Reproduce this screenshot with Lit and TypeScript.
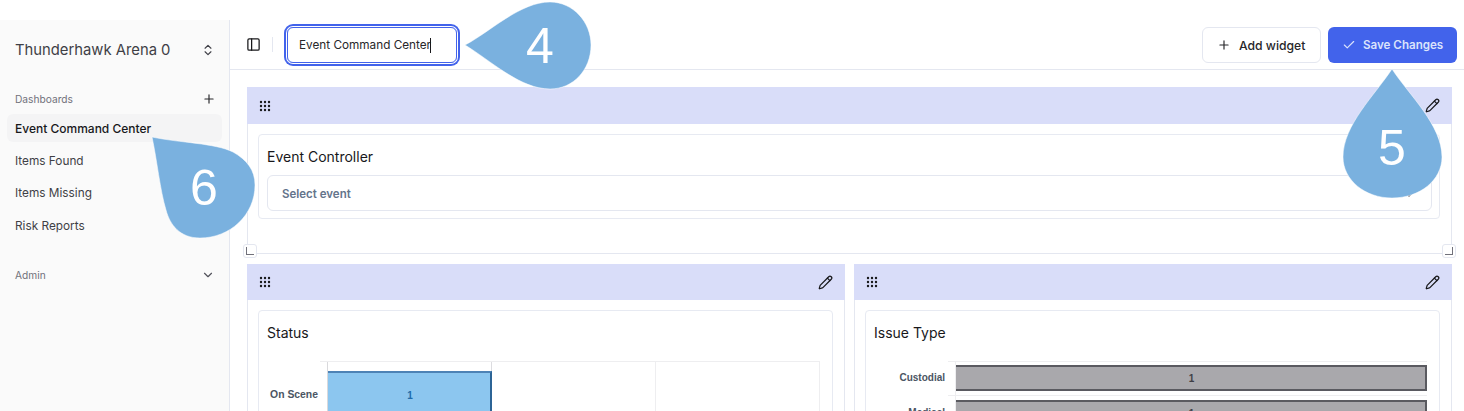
import { LitElement, html, css, svg } from "lit";
import { customElement } from "lit/decorators.js";

const grip = html`<svg class="ic" width="12" height="12" viewBox="0 0 12 12" fill="#18181b"><circle cx="2" cy="2" r="1.2"/><circle cx="6" cy="2" r="1.2"/><circle cx="10" cy="2" r="1.2"/><circle cx="2" cy="6" r="1.2"/><circle cx="6" cy="6" r="1.2"/><circle cx="10" cy="6" r="1.2"/><circle cx="2" cy="10" r="1.2"/><circle cx="6" cy="10" r="1.2"/><circle cx="10" cy="10" r="1.2"/></svg>`;
const pencil = html`<svg class="ic" width="15" height="15" viewBox="0 0 24 24" fill="none" stroke="#18181b" stroke-width="2" stroke-linecap="round" stroke-linejoin="round"><path d="M21.17 6.81a2.82 2.82 0 0 0-3.99-3.99L3.84 16.17a2 2 0 0 0-.5.83l-1.32 4.35a.5.5 0 0 0 .62.62l4.35-1.32a2 2 0 0 0 .83-.5z"/><path d="m15 5 4 4"/></svg>`;
const chevUD = html`<svg width="14" height="14" viewBox="0 0 24 24" fill="none" stroke="#3f3f46" stroke-width="2" stroke-linecap="round" stroke-linejoin="round"><path d="m7 15 5 5 5-5"/><path d="m7 9 5-5 5 5"/></svg>`;
const chevD = (s: number) => html`<svg width="${s}" height="${s}" viewBox="0 0 24 24" fill="none" stroke="#52525b" stroke-width="2" stroke-linecap="round" stroke-linejoin="round"><path d="m6 9 6 6 6-6"/></svg>`;
const plus = (s: number) => html`<svg width="${s}" height="${s}" viewBox="0 0 24 24" fill="none" stroke="#27272a" stroke-width="2" stroke-linecap="round" stroke-linejoin="round"><path d="M5 12h14"/><path d="M12 5v14"/></svg>`;

@customElement("app-root")
export class AppRoot extends LitElement {
  static styles = css`
    :host { display: block; width: 1464px; height: 411px; overflow: hidden; position: relative; background: #fff; font-family: Inter, "Noto Sans", sans-serif; color: #18181b; }
    .shell { display: flex; height: 411px; padding-top: 20px; box-sizing: border-box; }
    .side { width: 230px; flex: none; background: #fafafa; border-right: 1px solid #e4e7f0; box-sizing: border-box; padding: 0 7px; }
    .ws { display: flex; justify-content: space-between; align-items: center; height: 58px; box-sizing: border-box; padding: 2px 7px 0 8px; font-size: 14.8px; color: #3f3f46; }
    .grp { display: flex; justify-content: space-between; align-items: center; height: 28px; margin: 7px 0 1px; padding: 0 6px 0 8px; font-size: 10.2px; color: #71717a; }
    .item { display: flex; align-items: center; height: 28px; padding: 0 8px; margin-bottom: 4.5px; font-size: 11.8px; color: #3f3f46; border-radius: 6px; }
    .item.on { background: #f4f4f5; color: #18181b; font-weight: 500; font-size: 12px; }
    .admin { margin-top: 21px; padding-right: 7px; }
    .main { flex: 1; min-width: 0; display: flex; flex-direction: column; }
    .top { flex: none; height: 50px; box-sizing: border-box; border-bottom: 1px solid #e4e7f0; display: flex; align-items: center; padding: 1px 7px 0 16px; }
    .top > svg { flex: none; margin-bottom: 2px; }
    .div { width: 1px; height: 15px; background: #e4e7f0; margin: 0 14px 1px 11px; }
    .name { width: 170px; height: 36px; box-sizing: border-box; border: 1px solid #4263eb; border-radius: 6px; box-shadow: 0 0 0 1px #fff, 0 0 0 3px #4263eb; display: flex; align-items: center; padding: 0 11px; font-size: 11.75px; color: #27272a; }
    .caret { width: 1px; height: 15px; background: #18181b; margin-left: -1px; }
    .sp { flex: 1; }
    .btn { height: 36px; box-sizing: border-box; border-radius: 6px; display: flex; align-items: center; font-weight: 500; }
    .add { width: 119px; border: 1px solid #e4e7f0; gap: 8px; padding-left: 14px; color: #27272a; margin-right: 7px; font-size: 12.2px; }
    .save { width: 129px; background: #4263eb; color: #dbe3fb; gap: 7px; padding-left: 14px; font-size: 11.6px; font-weight: 600; }
    .body { padding: 17px 12px 0 17px; display: flex; flex-direction: column; gap: 10px; }
    .w { border: 1px solid #e4e7f0; border-top: none; box-sizing: border-box; position: relative; }
    .w1 { height: 167px; width: 1205px; }
    .row { display: grid; grid-template-columns: 598px 598px; gap: 9px; width: 1205px; }
    .bar { height: 36px; background: #d9ddf9; margin: 0 -1px; display: flex; justify-content: space-between; align-items: center; padding: 0 12px; }
    .w1 .bar { height: 37px; }
    .card { margin: 10px 11px 0 10px; border: 1px solid #e7eaf2; border-radius: 4px; padding: 0 7px 8px 8px; }
    .w1 .card { height: 85px; box-sizing: border-box; }
    .ct { font-size: 14px; height: 40px; box-sizing: border-box; padding-top: 2px; display: flex; align-items: center; color: #18181b; }
    .sel { height: 36px; box-sizing: border-box; border: 1px solid #e4e7f0; border-radius: 6px; display: flex; justify-content: space-between; align-items: center; padding: 2px 14px 0; font-size: 11.5px; font-weight: 600; color: #64748b; }
    .h { position: absolute; width: 14px; height: 14px; box-sizing: border-box; background: #fff; border: 1px solid #e4e7f0; border-radius: 3px; bottom: -5px; }
    .h::after { content: ""; position: absolute; width: 7px; height: 7px; bottom: 2px; }
    .h.l { left: -5px; } .h.l::after { left: 2px; border-left: 1px solid #71717a; border-bottom: 1px solid #71717a; }
    .h.r { right: -5px; } .h.r::after { right: 2px; border-right: 1px solid #71717a; border-bottom: 1px solid #71717a; }
    .chart { display: flex; height: 200px; font-family: "Liberation Sans", Arial, sans-serif; margin: 10px 5px 0 0; }
    .labels { flex: none; font-weight: 700; color: #4b5563; text-align: right; }
    .c1 .labels { width: 51px; padding-top: 28px; font-size: 10.4px; }
    .c2 .labels { width: 71px; padding-top: 11px; font-size: 10px; }
    .plot { flex: 1; border-top: 1px solid #eeeef0; }
    .c1 .plot { margin-left: 2px; padding-left: 7px; }
    .c2 .plot { margin-left: 3px; padding-left: 7px; background: linear-gradient(#eeeef0, #eeeef0) 0 33px/100% 1px no-repeat; }
    .lbl { line-height: 12px; }
    .c2 .lbl { margin-bottom: 23px; }
    .grid1 { height: 100%; border-left: 1px solid #d9d9dc; padding-top: 9px; background: linear-gradient(#dcdce0, #dcdce0) 163px 0/1px 100% no-repeat, linear-gradient(#eeeef0, #eeeef0) 327px 0/1px 100% no-repeat, linear-gradient(#eeeef0, #eeeef0) 491px 0/1px 100% no-repeat; }
    .b { display: flex; align-items: center; justify-content: center; box-sizing: border-box; font-size: 10px; font-weight: 700; }
    .b1 { width: 164px; height: 46px; padding-left: 2px; background: #8cc6ef; border-top: 2px solid #4d82b5; border-right: 2px solid #2c6496; color: #1f6ba8; }
    .grid2 { height: 100%; padding-top: 3px; border-left: 1px solid #eeeef0; }
    .b2 { height: 26px; padding-left: 2px; background: #a9a8ac; border: 2px solid #5a5a60; color: #3f3f46; margin-bottom: 9px; border-left: none; }
    .over { position: absolute; inset: 0; pointer-events: none; }
    .over svg { position: absolute; left: 0; top: 0; }
    .num { position: absolute; font-family: "Liberation Sans", Arial, sans-serif; color: #fff; font-size: 50px; line-height: 50px; width: 60px; text-align: center; }
    .n4 { left: 510px; top: 21px; } .n5 { left: 1362px; top: 123px; } .n6 { left: 174px; top: 163px; }
  `;
  render() {
    return html`<div class="shell">
      <aside class="side">
        <div class="ws"><span>Thunderhawk Arena 0</span>${chevUD}</div>
        <div class="grp"><span>Dashboards</span>${plus(14)}</div>
        <div class="item on">Event Command Center</div>
        <div class="item">Items Found</div>
        <div class="item">Items Missing</div>
        <div class="item">Risk Reports</div>
        <div class="grp admin"><span>Admin</span>${chevD(14)}</div>
      </aside>
      <div class="main">
        <header class="top">
          <svg width="15" height="15" viewBox="0 0 24 24" fill="none" stroke="#18181b" stroke-width="2" stroke-linecap="round" stroke-linejoin="round"><rect width="18" height="18" x="3" y="3" rx="2"/><path d="M9 3v18"/></svg>
          <span class="div"></span>
          <div class="name"><span>Event Command Center</span><span class="caret"></span></div>
          <span class="sp"></span>
          <div class="btn add">${plus(14)}<span>Add widget</span></div>
          <div class="btn save"><svg width="14" height="14" viewBox="0 0 24 24" fill="none" stroke="#dbe3fb" stroke-width="2" stroke-linecap="round" stroke-linejoin="round"><path d="M20 6 9 17l-5-5"/></svg><span>Save Changes</span></div>
        </header>
        <div class="body">
          <section class="w w1">
            <div class="bar">${grip}${pencil}</div>
            <div class="card"><div class="ct">Event Controller</div><div class="sel"><span>Select event</span>${chevD(16)}</div></div>
            <span class="h l"></span><span class="h r"></span>
          </section>
          <div class="row">
            <section class="w">
              <div class="bar">${grip}${pencil}</div>
              <div class="card"><div class="ct">Status</div>
                <div class="chart c1"><div class="labels"><div class="lbl">On Scene</div></div>
                  <div class="plot"><div class="grid1"><div class="b b1">1</div></div></div></div></div>
            </section>
            <section class="w">
              <div class="bar">${grip}${pencil}</div>
              <div class="card"><div class="ct">Issue Type</div>
                <div class="chart c2"><div class="labels"><div class="lbl">Custodial</div><div class="lbl">Medical</div></div>
                  <div class="plot"><div class="grid2"><div class="b b2">1</div><div class="b b2">1</div></div></div></div></div>
            </section>
          </div>
        </div>
      </div>
    </div>
    <div class="over">
      <svg width="1464" height="411" fill="#7ab1df" stroke="#ffffff" stroke-opacity=".5">
        ${svg`<path d="M465 45C490 32 520 2 550 2C573 2 591 22 591 45C591 70 573 89 550 89C520 89 490 60 465 45Z"/>
        <path d="M1392 69C1375 95 1343 125 1343 157C1343 180 1365 198 1392 198C1420 198 1442 180 1442 157C1442 125 1409 95 1392 69Z"/>
        <path d="M152 137C180 143 215 143 233 152C247 160 255 170 255 185C255 215 230 238 200 238C180 238 170 225 166 210C160 190 157 160 152 137Z"/>`}
      </svg>
      <div class="num n4">4</div><div class="num n5">5</div><div class="num n6">6</div>
    </div>`;
  }
}
